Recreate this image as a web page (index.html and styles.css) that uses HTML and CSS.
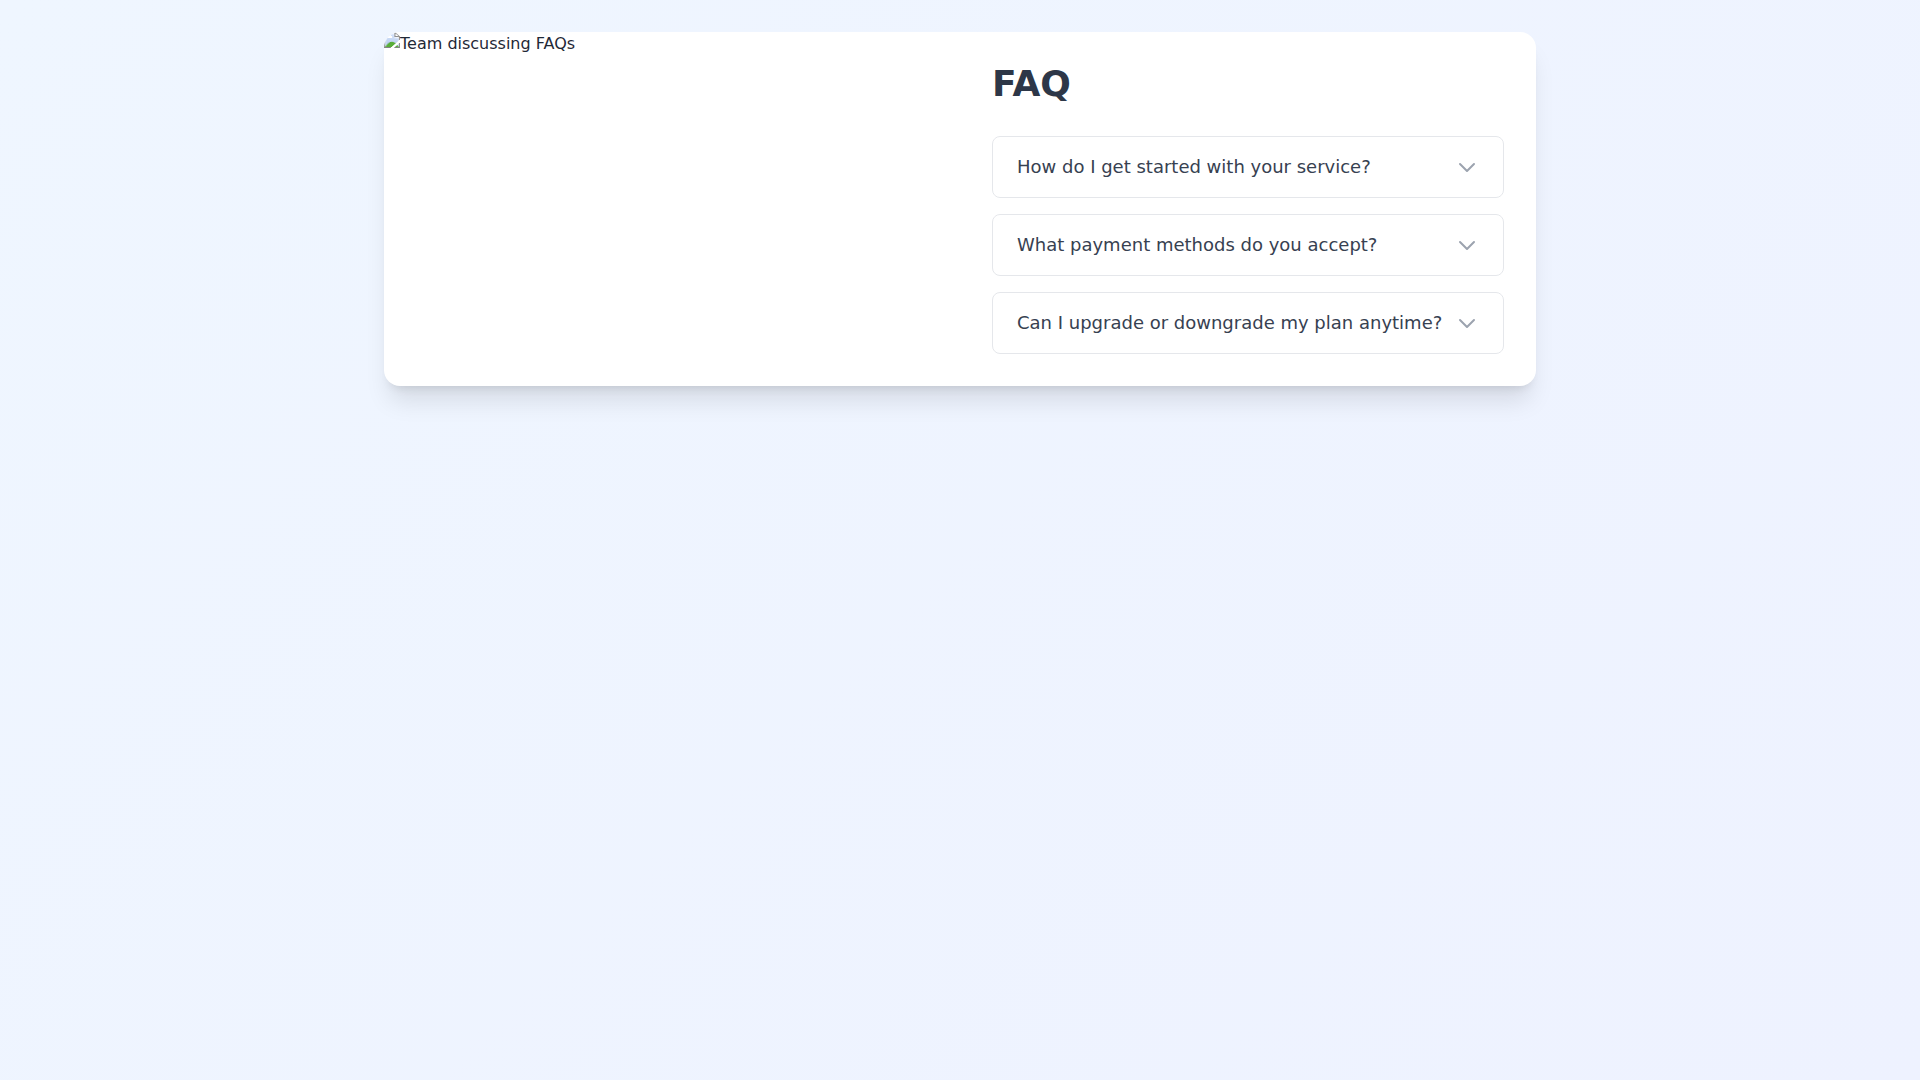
FILE: index.html
```html
<!DOCTYPE html>
<html lang="en">
<head>
<meta charset="utf-8">
<title>FAQ</title>
<link rel="stylesheet" href="styles.css">
</head>
<body>
  <main class="page">
    <section class="card">
      <div class="media">
        <img class="media-img" src="team-faq.jpg" alt="Team discussing FAQs">
      </div>
      <div class="faq">
        <h1 class="faq-title">FAQ</h1>
        <div class="faq-list">
          <button class="faq-item" type="button">
            <span class="faq-q">How do I get started with your service?</span>
            <svg class="chev" viewBox="0 0 24 24" fill="none" stroke="currentColor" stroke-width="2" stroke-linecap="round" stroke-linejoin="round"><path d="M19 9l-7 7-7-7"/></svg>
          </button>
          <button class="faq-item" type="button">
            <span class="faq-q">What payment methods do you accept?</span>
            <svg class="chev" viewBox="0 0 24 24" fill="none" stroke="currentColor" stroke-width="2" stroke-linecap="round" stroke-linejoin="round"><path d="M19 9l-7 7-7-7"/></svg>
          </button>
          <button class="faq-item" type="button">
            <span class="faq-q">Can I upgrade or downgrade my plan anytime?</span>
            <svg class="chev" viewBox="0 0 24 24" fill="none" stroke="currentColor" stroke-width="2" stroke-linecap="round" stroke-linejoin="round"><path d="M19 9l-7 7-7-7"/></svg>
          </button>
        </div>
      </div>
    </section>
  </main>
</body>
</html>
```
FILE: styles.css
```css
* { box-sizing: border-box; }
html, body { margin: 0; padding: 0; }
body {
  min-height: 100vh;
  background: linear-gradient(135deg, #eff6ff 0%, #eef2ff 100%);
  font-family: "DejaVu Sans", sans-serif;
  color: #1f2937;
}
.page {
  max-width: 1152px;
  margin: 0 auto;
  padding-top: 32px;
}
.card {
  display: flex;
  background: #ffffff;
  border-radius: 16px;
  box-shadow: 0 20px 25px -5px rgba(0,0,0,0.1), 0 8px 10px -6px rgba(0,0,0,0.1);
  overflow: hidden;
}
.media {
  width: 50%;
}
.media-img {
  display: block;
  font-size: 16px;
  line-height: 24px;
  color: #1f2937;
}
.faq {
  width: 50%;
  padding: 32px;
}
.faq-title {
  margin: 0 0 32px 0;
  font-size: 36px;
  line-height: 40px;
  font-weight: 700;
  color: #2d3748;
}
.faq-list {
  display: flex;
  flex-direction: column;
  gap: 16px;
}
.faq-item {
  display: flex;
  align-items: center;
  justify-content: space-between;
  width: 100%;
  padding: 16px 24px;
  background: #ffffff;
  border: 1px solid #e5e7eb;
  border-radius: 8px;
  font-family: "DejaVu Sans", sans-serif;
  font-size: 18px;
  line-height: 28px;
  color: #374151;
  text-align: left;
  cursor: pointer;
}
.chev {
  width: 24px;
  height: 24px;
  flex: none;
  color: #9ca3af;
}
```
